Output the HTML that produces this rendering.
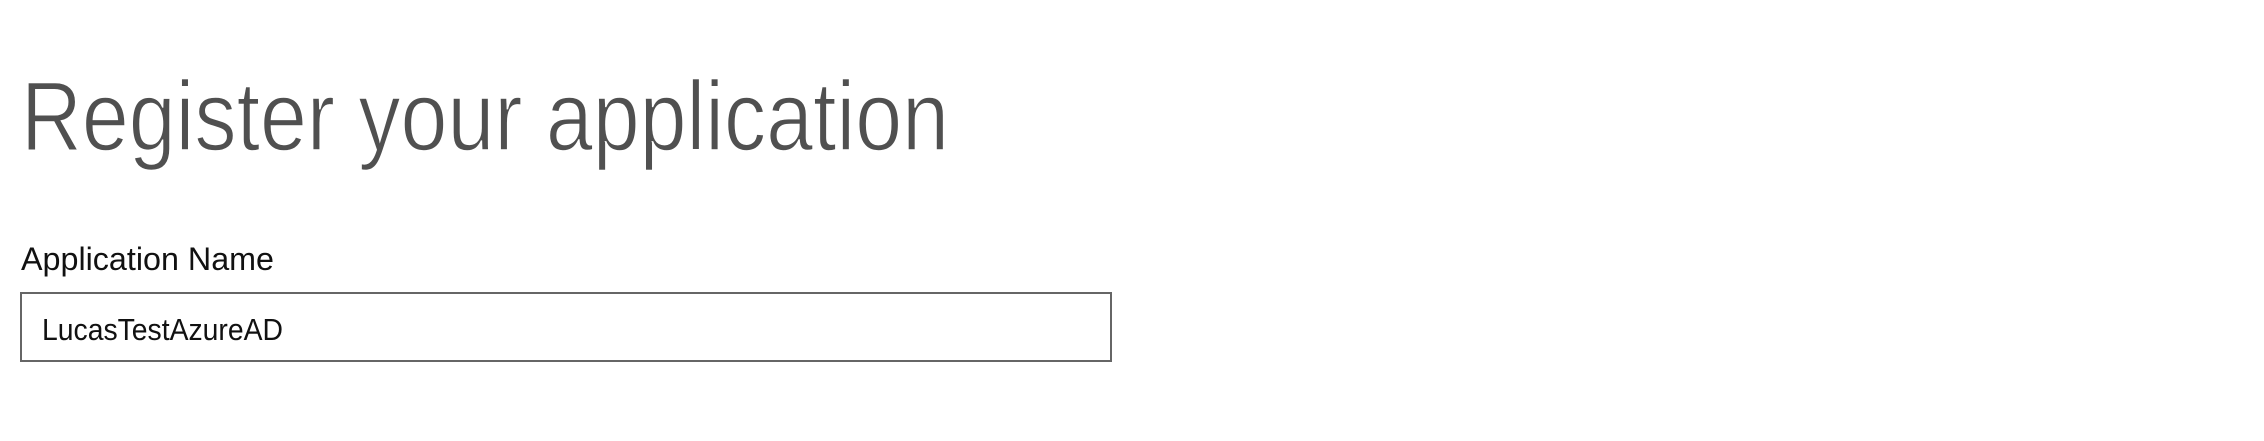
<!DOCTYPE html>
<html><head><meta charset="utf-8"><style>
html,body{margin:0;padding:0;background:#fff;width:2264px;height:441px;overflow:hidden}
svg{display:block}
</style></head><body>
<svg width="2264" height="441" viewBox="0 0 2264 441" xmlns="http://www.w3.org/2000/svg">
<text x="21" y="150" font-family="Liberation Sans, sans-serif" font-size="98" fill="#505050" stroke="#fff" stroke-width="1.6" textLength="928" lengthAdjust="spacingAndGlyphs">Register your application</text>
<text x="21" y="270" font-family="Liberation Sans, sans-serif" font-size="32" fill="#111" textLength="253" lengthAdjust="spacingAndGlyphs">Application Name</text>
<rect x="21" y="293" width="1090" height="68" fill="#fff" stroke="#666" stroke-width="2"/>
<text x="42" y="340" font-family="Liberation Sans, sans-serif" font-size="31" fill="#111" textLength="241" lengthAdjust="spacingAndGlyphs">LucasTestAzureAD</text>
</svg>
</body></html>
